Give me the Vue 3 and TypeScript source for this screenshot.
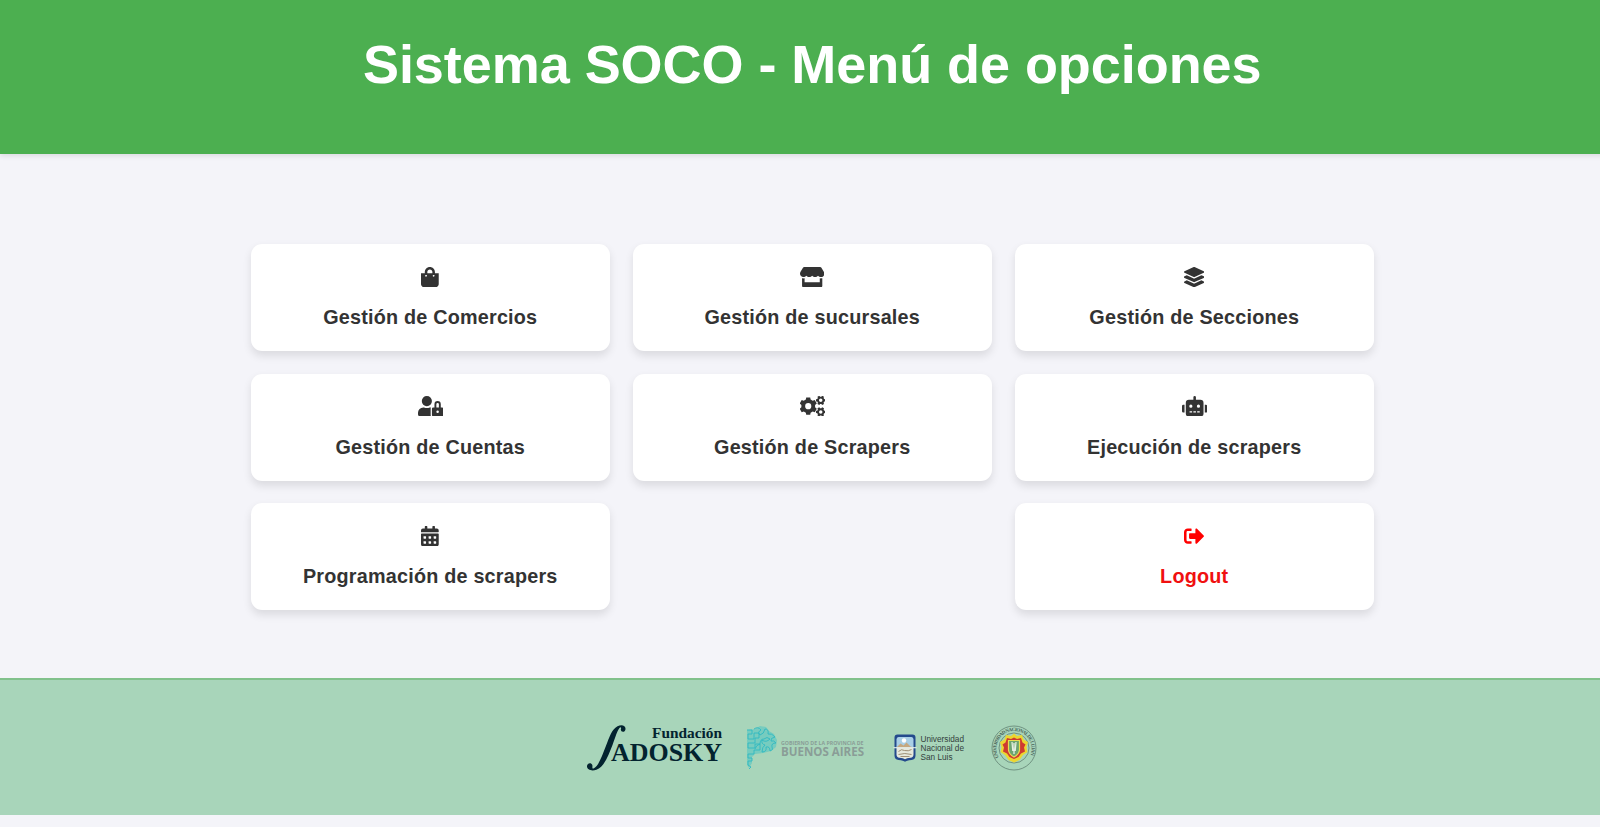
<script setup lang="ts">
interface MenuCard {
  label: string
  width: number
  path: string
  danger?: boolean
  column?: number
}

function gear(cx: number, cy: number, outer: number, inner: number, hole: number, offset: number): string {
  const points: string[] = []
  const teeth = 6
  for (let i = 0; i < teeth; i++) {
    const mid = offset + (i * 360) / teeth
    const corners: [number, number][] = [[-20, inner], [-13, outer], [13, outer], [20, inner]]
    for (const [delta, radius] of corners) {
      const a = ((mid + delta) * Math.PI) / 180
      points.push(`${(cx + radius * Math.cos(a)).toFixed(1)} ${(cy + radius * Math.sin(a)).toFixed(1)}`)
    }
  }
  const ring = `M${cx - hole} ${cy}a${hole} ${hole} 0 1 0 ${hole * 2} 0a${hole} ${hole} 0 1 0 ${-hole * 2} 0z`
  return `M${points.join('L')}z${ring}`
}

const calendarCells = [64, 192, 320]
  .flatMap((x) => [256, 384].map((y) => `M${x} ${y}v52q0 12 12 12h40q12 0 12-12v-40q0-12-12-12z`))
  .join('')

const cards: MenuCard[] = [
  {
    label: 'Gestión de Comercios',
    width: 448,
    path: 'M352 160v-32C352 57.42 294.579 0 224 0 153.42 0 96 57.42 96 128v32H0v272c0 44.183 35.817 80 80 80h288c44.183 0 80-35.817 80-80V160h-96zm-192-32c0-35.29 28.71-64 64-64s64 28.71 64 64v32H160v-32zm160 120c-13.255 0-24-10.745-24-24s10.745-24 24-24 24 10.745 24 24-10.745 24-24 24zm-192 0c-13.255 0-24-10.745-24-24s10.745-24 24-24 24 10.745 24 24-10.745 24-24 24z',
  },
  {
    label: 'Gestión de sucursales',
    width: 616,
    path: 'M602 118.6L537.1 15C531.3 5.7 521 0 510 0H106C95 0 84.7 5.7 78.9 15L14 118.6c-33.5 53.5-3.8 127.9 58.8 136.4 4.5.6 9.1.9 13.7.9 29.6 0 55.8-13 73.8-33.1 18 20.1 44.3 33.1 73.8 33.1 29.6 0 55.8-13 73.8-33.1 18 20.1 44.3 33.1 73.8 33.1 29.6 0 55.8-13 73.8-33.1 18.1 20.1 44.3 33.1 73.8 33.1 4.7 0 9.2-.3 13.7-.9 62.8-8.4 92.6-82.8 59-136.4zM529.5 288c-10 0-19.9-1.5-29.5-3.8V384H116v-99.8c-9.6 2.2-19.5 3.8-29.5 3.8-6 0-12.1-.4-18-1.2-5.6-.8-11.1-2.1-16.4-3.6V480c0 17.7 14.3 32 32 32h448c17.7 0 32-14.3 32-32V283.2c-5.4 1.6-10.8 2.9-16.4 3.6-6.1.8-12.1 1.2-18.2 1.2z',
  },
  {
    label: 'Gestión de Secciones',
    width: 512,
    path: 'M12.41 148.02l232.94 105.67c6.8 3.09 14.49 3.09 21.29 0l232.94-105.67c16.55-7.51 16.55-32.52 0-40.03L266.65 2.31a25.607 25.607 0 0 0-21.29 0L12.41 107.98c-16.55 7.51-16.55 32.53 0 40.04zm487.18 88.28l-58.09-26.33-161.64 73.27c-7.56 3.43-15.59 5.17-23.86 5.17s-16.29-1.74-23.86-5.17L70.51 209.97l-58.1 26.33c-16.55 7.5-16.55 32.5 0 40l232.94 105.59c6.8 3.08 14.49 3.08 21.29 0L499.59 276.3c16.55-7.5 16.55-32.5 0-40zm0 127.8l-57.87-26.23-161.86 73.37c-7.56 3.43-15.59 5.17-23.86 5.17s-16.29-1.74-23.86-5.17L70.29 337.87 12.41 364.1c-16.55 7.5-16.55 32.5 0 40l232.94 105.59c6.8 3.08 14.49 3.08 21.29 0L499.59 404.1c16.55-7.5 16.55-32.5 0-40z',
  },
  {
    label: 'Gestión de Cuentas',
    width: 640,
    path: 'M224 256A128 128 0 1 0 96 128a128 128 0 0 0 128 128zm96 64a63.08 63.08 0 0 1 8.1-30.5c-4.8-.5-9.5-1.5-14.5-1.5h-16.7a174.08 174.08 0 0 1-145.8 0h-16.7A134.43 134.43 0 0 0 0 422.4V464a48 48 0 0 0 48 48h280.9a63.54 63.54 0 0 1-8.9-32V320zm288-32h-32v-80a80 80 0 0 0-160 0v80h-32a32 32 0 0 0-32 32v160a32 32 0 0 0 32 32h224a32 32 0 0 0 32-32V320a32 32 0 0 0-32-32zM496 432a32 32 0 1 1 32-32 32 32 0 0 1-32 32zm32-144h-64v-80a32 32 0 0 1 64 0z',
  },
  {
    label: 'Gestión de Scrapers',
    width: 640,
    path: gear(208, 256, 226, 176, 78, 30) + gear(524, 110, 122, 94, 44, 0) + gear(524, 402, 122, 94, 44, 0),
  },
  {
    label: 'Ejecución de scrapers',
    width: 640,
    path: 'M32 224H64V416H32A32 32 0 0 1 0 384V256A32 32 0 0 1 32 224Zm512-48V448a64 64 0 0 1-64 64H160a64 64 0 0 1-64-64V176a80 80 0 0 1 80-80H288V32a32 32 0 0 1 64 0V96H464A80 80 0 0 1 544 176ZM264 256a40 40 0 1 0-40 40A40 40 0 0 0 264 256Zm-8 128H192v32h64Zm96 0H288v32h64ZM456 256a40 40 0 1 0-40 40A40 40 0 0 0 456 256Zm-8 128H384v32h64ZM640 256V384a32 32 0 0 1-32 32H576V224h32A32 32 0 0 1 640 256Z',
  },
  {
    label: 'Programación de scrapers',
    width: 448,
    path:
      'M0 160v-48q0-48 48-48h48V12q0-12 12-12h40q12 0 12 12v52h128V12q0-12 12-12h40q12 0 12 12v52h48q48 0 48 48v36q0 12-12 12zM12 192h424q12 0 12 12v260q0 48-48 48H48q-48 0-48-48V204q0-12 12-12z' +
      calendarCells,
  },
  {
    label: 'Logout',
    width: 512,
    danger: true,
    column: 3,
    path: 'M497 273L329 441c-15 15-41 4.5-41-17v-96H152c-13.3 0-24-10.7-24-24v-96c0-13.3 10.7-24 24-24h136V88c0-21.4 25.9-32 41-17l168 168c9.3 9.4 9.3 24.6 0 34zM192 436v-40c0-6.6-5.4-12-12-12H96c-17.7 0-32-14.3-32-32V160c0-17.7 14.3-32 32-32h84c6.6 0 12-5.4 12-12V76c0-6.6-5.4-12-12-12H96c-53 0-96 43-96 96v192c0 53 43 96 96 96h84c6.6 0 12-5.4 12-12z',
  },
]
</script>

<template>
  <div class="viewport">
    <div class="page">
      <header class="header">
        <h1 class="title">Sistema SOCO - Menú de opciones</h1>
      </header>

      <main class="menu">
        <a v-for="card in cards" :key="card.label" class="card" :class="{ danger: card.danger, last: card.column === 3 }">
          <svg class="icon" :viewBox="`0 0 ${card.width} 512`" fill="currentColor" fill-rule="evenodd" aria-hidden="true">
            <path :d="card.path" />
          </svg>
          <span class="label">{{ card.label }}</span>
        </a>
      </main>

      <footer class="footer">
        <!-- Fundación Sadosky -->
        <svg class="logo" width="139" height="50" viewBox="0 0 139 50">
          <g fill="#03232f">
            <path d="M41.5 6.2C41.8 2.2 37.5 1.2 33.5 3.2C27.5 6.4 25.5 14 21.9 23C18 33 14.3 43.4 10 45.2C7.5 46 8.8 44 8.3 42C7.2 39.1 3.2 40 3 43.1C2.8 47 8 48.4 12.4 46.7C20.900 43.3 24.5 32 28.5 22C31.5 14 33.2 7.5 35.7 4.8C37.2 3.5 37.4 4.8 36.8 6.3C36.8 9.8 41.2 9.5 41.5 6.2Z" />
            <text class="serif" x="68" y="15.2" font-size="14" textLength="70" lengthAdjust="spacingAndGlyphs">Fundación</text>
            <text class="serif" x="27" y="37.5" font-size="25.5" textLength="111" lengthAdjust="spacingAndGlyphs">ADOSKY</text>
          </g>
        </svg>

        <!-- Provincia de Buenos Aires -->
        <svg class="logo" width="123" height="50" viewBox="0 0 123 50">
          <path d="M2 7L10 6L15 3L21 4L24 8L29 11L32 17L31 24L26 28L18 30L10 31L7 34L7 40L4 45L2 42Z" fill="#45c3c4" opacity=".5" />
          <g fill="none" stroke="#2fb9c2" stroke-width=".9" stroke-linejoin="round">
            <path d="M2 7h5v4H3v5h6v-6h5v5h-4v5H3v5h7v-4h5v6H9v4H3v4h4v3H3v4l3 2l-2 2" />
            <path d="M9 6q4-3 7 1q-4 2-1 5q4-1 5-6q4 0 3 5q4-1 7 3q-5 1-4 4q3-1 5 2q-5 0-4 4q2 3-2 4q0-5-4-4q1 5-4 5q0-5 3-7q-4-1-3-5q4 3 8-1q-3-3-6 0q-4 0-4 5q-4 1-5 5" />
          </g>
          <g fill="#8a9d97" class="province">
            <text x="36" y="22.1" font-size="4.8" textLength="82.5" lengthAdjust="spacingAndGlyphs">GOBIERNO DE LA PROVINCIA DE</text>
            <text x="36" y="32.8" font-size="11.8" textLength="83" lengthAdjust="spacingAndGlyphs">BUENOS AIRES</text>
          </g>
        </svg>

        <!-- Universidad Nacional de San Luis -->
        <svg class="logo" width="78" height="50" viewBox="0 0 78 50">
          <g transform="translate(-.5 -.5)">
            <path d="M8 12H23Q26 12 26 15V33Q26 37 22 37.5Q17 38 15.500 39.2Q14 38 9 37.5Q5 37 5 33V15Q5 12 8 12Z" fill="#244a8c" />
            <path d="M9 14.5H22Q24 14.5 24 17V25H7V17Q7 14.5 9 14.5Z" fill="#a9cfe6" />
            <path d="M7 25H24V32Q24 35 21 35.3Q17 35.7 15.5 36.7Q14 35.7 10 35.3Q7 35 7 32Z" fill="#e6e8dc" />
            <circle cx="14.5" cy="18" r="2.2" fill="#fff" />
            <path d="M7 25l4-4 3 2 3-3 4 4 3 1z" fill="#c5a880" />
            <path d="M4 25.2H27" stroke="#e8f2ee" stroke-width="1.1" />
            <path d="M9 29q3-3 6-1q4 1 7-1M9 32q6-2 13 0M11 34h9" fill="none" stroke="#96856a" stroke-width=".9" />
          </g>
          <g class="university" fill="#33413c" font-size="8.4">
            <text x="30.5" y="19.3" textLength="43.5" lengthAdjust="spacingAndGlyphs">Universidad</text>
            <text x="30.5" y="28.4" textLength="43.5" lengthAdjust="spacingAndGlyphs">Nacional de</text>
            <text x="30.5" y="37.4" textLength="32" lengthAdjust="spacingAndGlyphs">San Luis</text>
          </g>
        </svg>

        <!-- Universidad Nacional de Luján -->
        <svg class="logo" width="50" height="50" viewBox="0 0 50 50">
          <defs>
            <path id="seal-arc" d="M8.8 34.5A17.6 17.6 0 1 1 39.2 34.5" />
          </defs>
          <g fill="none" stroke="#587568" stroke-width=".7">
            <circle cx="24" cy="25" r="22" />
            <circle cx="24" cy="25" r="15" />
          </g>
          <text class="seal" fill="#4b655a" font-size="5"><textPath href="#seal-arc" textLength="71">UNIVERSIDAD NACIONAL DE LUJAN</textPath></text>
          <path d="M24 10.500L27 13L32 12L33.500 16.500L38 19L36.500 24L37.500 29L33 32L29.500 37L24 39.500L18.500 37L15 32L10.500 29L11.500 24L10 19L14.500 16.500L16 12L21 13Z" fill="#ecd630" />
          <path d="M24 14.5l3 1.500 4-1 1.500 4.500 3 2-1.500 3 1 4-4 2-2.500 3.500-4.500 2-4.500-2-2.500-3.500-4-2 1-4-1.500-3 3-2 1.500-4.500 4 1z" fill="#cf3a30" />
          <path d="M18.5 17.5H29.5V27Q29 31.5 24 34Q19 31.5 18.5 27Z" fill="#6da570" stroke="#eadc50" stroke-width="1.2" />
          <path d="M22 19l.8 9M26 19l-.8 9M24 20v11" stroke="#e6efe2" stroke-width="1.3" />
        </svg>
      </footer>
    </div>
  </div>
</template>

<style>
html,
body {
  background: #f4f4f9;
}
</style>

<style scoped>
.viewport {
  width: 100%;
  height: 827px;
  overflow: hidden;
  font-family: 'Liberation Sans', Arial, sans-serif;
}

.page {
  display: flex;
  flex-direction: column;
  width: 1624.5px;
  height: 815px;
  background: #f4f4f9;
}

.header {
  box-sizing: border-box;
  flex: none;
  height: 153.5px;
  padding-top: 33px;
  background: #4caf50;
  box-shadow: 0 2px 5px rgba(0, 0, 0, 0.1);
  text-align: center;
}

.title {
  margin: 0;
  color: #fff;
  font-size: 54px;
  line-height: 62px;
  font-weight: 700;
  letter-spacing: -0.05px;
}

.menu {
  display: grid;
  grid-template-columns: repeat(3, 359.5px);
  grid-auto-rows: 107px;
  gap: 22.5px;
  justify-content: center;
  padding-top: 90.7px;
}

.card {
  box-sizing: border-box;
  display: flex;
  flex-direction: column;
  align-items: center;
  padding-top: 22.4px;
  border-radius: 11.25px;
  background: #fff;
  box-shadow: 0 4.5px 9px rgba(0, 0, 0, 0.1);
  color: #333;
}

.card.last {
  grid-column: 3;
}

.card.danger {
  color: #f00;
}

.icon {
  display: block;
  height: 20.25px;
}

.label {
  margin-top: 19.3px;
  font-size: 19.8px;
  line-height: 23px;
  font-weight: 700;
  letter-spacing: 0.21px;
}

.danger .label {
  color: #f01010;
}

.footer {
  box-sizing: border-box;
  display: flex;
  align-items: center;
  justify-content: center;
  gap: 22px;
  height: 137px;
  margin-top: auto;
  border-top: 2px solid #81c18c;
  background: #a8d5ba;
}

.logo {
  flex: none;
}

.serif {
  font-family: 'Liberation Serif', serif;
  font-weight: 700;
}

.province {
  font-family: 'Open Sans', sans-serif;
  font-weight: 700;
}

.university {
  font-family: 'Liberation Sans', sans-serif;
}

.seal {
  font-family: 'Liberation Serif', serif;
  font-weight: 700;
}
</style>
